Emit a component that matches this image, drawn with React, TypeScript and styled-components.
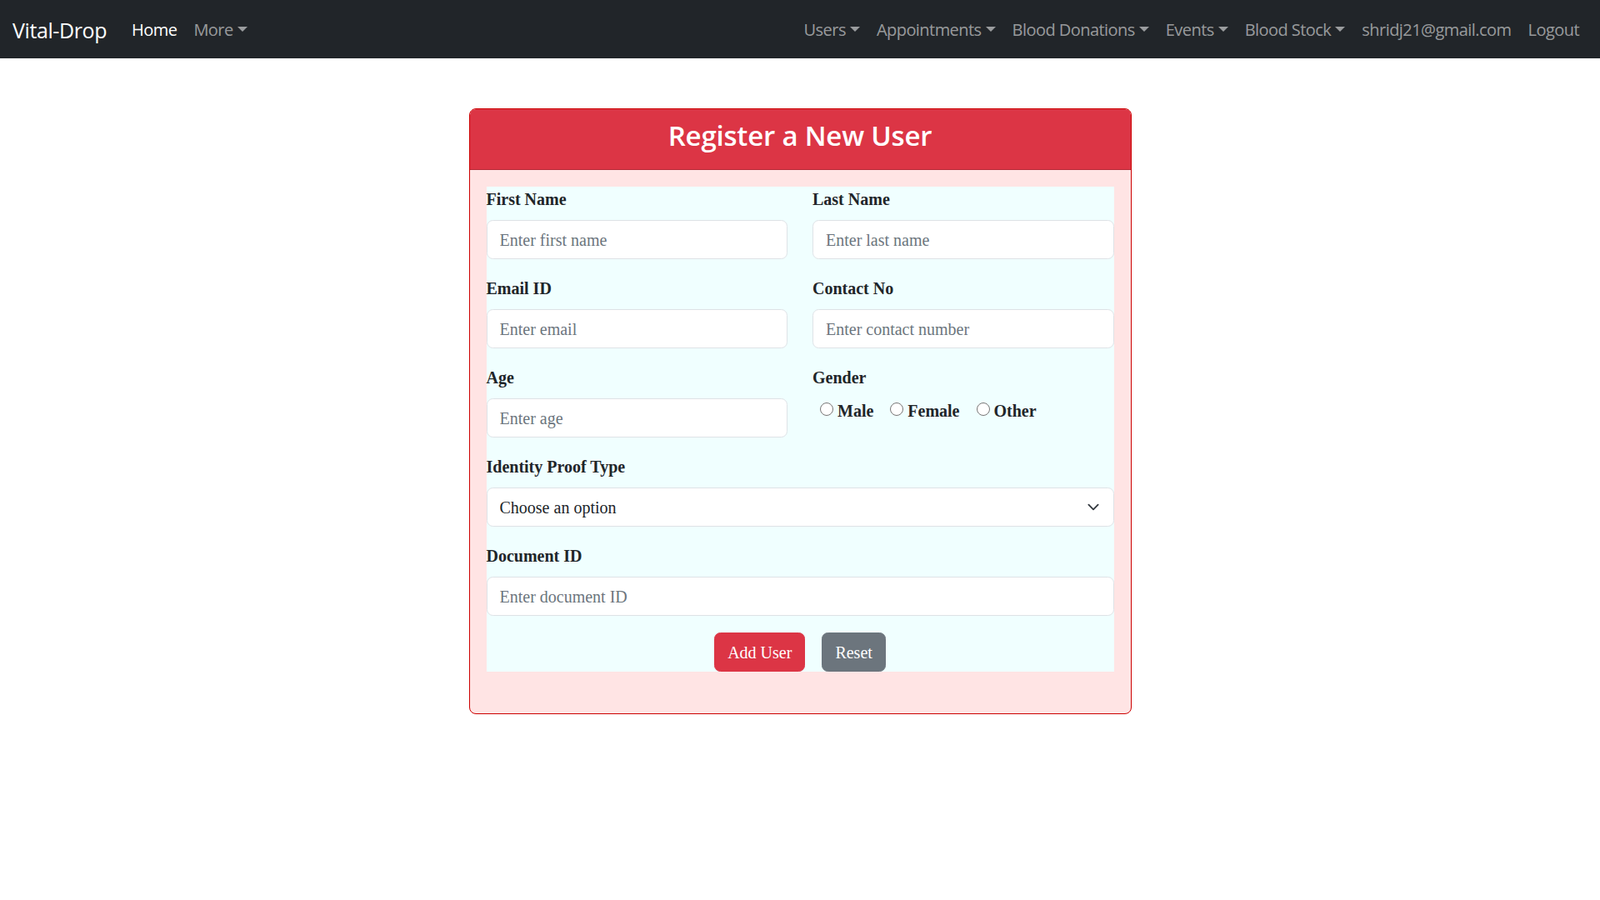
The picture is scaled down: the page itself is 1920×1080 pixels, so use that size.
import React from "react";
import styled, { createGlobalStyle } from "styled-components";

const GlobalStyle = createGlobalStyle`
  body {
    margin: 0;
    background: #fff;
    color: #212529;
    font-family: "Liberation Serif", "Times New Roman", serif;
  }
`;

const NavBar = styled.nav`
  height: 70px;
  box-sizing: border-box;
  padding: 2px 15px 0;
  background: #212529;
  display: flex;
  align-items: center;
  justify-content: space-between;
  font-family: "Open Sans", "Noto Sans", sans-serif;
`;

const NavGroup = styled.div`
  display: flex;
  align-items: center;
`;

const Brand = styled.a`
  font-size: 25px;
  line-height: 38px;
  letter-spacing: -0.4px;
  color: #fff;
  margin-right: 20px;
  text-decoration: none;
`;

const NavLink = styled.a<{ $active?: boolean; $dropdown?: boolean }>`
  font-size: 20px;
  line-height: 30px;
  letter-spacing: -0.55px;
  padding: 0 10px;
  color: ${(p) => (p.$active ? "#fff" : "rgba(255, 255, 255, 0.55)")};
  text-decoration: none;
  white-space: nowrap;

  ${(p) =>
    p.$dropdown &&
    `
    &::after {
      content: "";
      display: inline-block;
      margin-left: 5px;
      vertical-align: 5px;
      border-top: 6px solid;
      border-left: 6px solid transparent;
      border-right: 6px solid transparent;
    }
  `}
`;

const Main = styled.main`
  display: flex;
  justify-content: center;
  padding-top: 60px;
`;

const Card = styled.div`
  width: 795px;
  box-sizing: border-box;
  border: 1px solid #cc0000;
  border-radius: 8px;
  background: #ffe4e4;
  overflow: hidden;
`;

const CardHeader = styled.div`
  background: #dc3545;
  border-bottom: 1px solid rgba(0, 0, 0, 0.175);
  padding: 11px 20px 9px;
  text-align: center;
`;

const Title = styled.h3`
  margin: 0 0 10px;
  font-family: "Open Sans", "Noto Sans", sans-serif;
  font-size: 33px;
  font-weight: 600;
  line-height: 42px;
  letter-spacing: -0.2px;
  color: #fff;
`;

const CardBody = styled.div`
  padding: 20px 20px 50px;
`;

const Form = styled.form`
  background: #f0ffff;
  display: grid;
  grid-template-columns: 1fr 1fr;
  column-gap: 30px;
`;

const Field = styled.div<{ $full?: boolean }>`
  margin-bottom: 20px;
  grid-column: ${(p) => (p.$full ? "1 / -1" : "auto")};
`;

const Label = styled.label`
  display: block;
  font-size: 20px;
  line-height: 30px;
  font-weight: bold;
  margin-bottom: 10px;
`;

const Input = styled.input`
  display: block;
  width: 100%;
  box-sizing: border-box;
  padding: 7.5px 15px;
  font-family: inherit;
  font-size: 20px;
  line-height: 30px;
  color: #212529;
  background: #fff;
  border: 1px solid #dee2e6;
  border-radius: 7.5px;

  &::placeholder {
    color: #6c757d;
  }
`;

const SelectWrap = styled.div`
  position: relative;
`;

const Select = styled.select`
  display: block;
  width: 100%;
  box-sizing: border-box;
  appearance: none;
  padding: 7.5px 45px 7.5px 15px;
  font-family: inherit;
  font-size: 20px;
  line-height: 30px;
  color: #212529;
  background: #fff;
  border: 1px solid #dee2e6;
  border-radius: 7.5px;
`;

const Chevron = styled.svg`
  position: absolute;
  right: 15px;
  top: 50%;
  width: 20px;
  height: 15px;
  margin-top: -7.5px;
  pointer-events: none;
`;

const RadioGroup = styled.div`
  display: flex;
  align-items: center;
  gap: 20px;
  padding-left: 9px;
  height: 30px;
`;

const RadioOption = styled.label`
  display: inline-flex;
  align-items: center;
  gap: 5px;
  font-size: 20px;
  line-height: 30px;
  font-weight: bold;
`;

const Radio = styled.input`
  width: 16px;
  height: 16px;
  margin: -4px 0 0;
`;

const Actions = styled.div`
  grid-column: 1 / -1;
  display: flex;
  justify-content: center;
  gap: 20px;
`;

const Button = styled.button<{ $variant: "danger" | "secondary" }>`
  padding: 7.5px 15px;
  font-family: inherit;
  font-size: 20px;
  line-height: 30px;
  color: #fff;
  background: ${(p) => (p.$variant === "danger" ? "#dc3545" : "#6c757d")};
  border: 1px solid ${(p) => (p.$variant === "danger" ? "#dc3545" : "#6c757d")};
  border-radius: 7.5px;
  cursor: pointer;
`;

const App = () => {
  const rightLinks = ["Users", "Appointments", "Blood Donations", "Events", "Blood Stock"];

  return (
    <>
      <GlobalStyle />
      <NavBar>
        <NavGroup>
          <Brand href="#">Vital-Drop</Brand>
          <NavLink $active href="#">
            Home
          </NavLink>
          <NavLink $dropdown href="#">
            More
          </NavLink>
        </NavGroup>
        <NavGroup>
          {rightLinks.map((link) => (
            <NavLink key={link} $dropdown href="#">
              {link}
            </NavLink>
          ))}
          <NavLink href="#">shridj21@gmail.com</NavLink>
          <NavLink href="#">Logout</NavLink>
        </NavGroup>
      </NavBar>

      <Main>
        <Card>
          <CardHeader>
            <Title>Register a New User</Title>
          </CardHeader>
          <CardBody>
            <Form onSubmit={(e) => e.preventDefault()}>
              <Field>
                <Label>First Name</Label>
                <Input placeholder="Enter first name" />
              </Field>
              <Field>
                <Label>Last Name</Label>
                <Input placeholder="Enter last name" />
              </Field>
              <Field>
                <Label>Email ID</Label>
                <Input placeholder="Enter email" />
              </Field>
              <Field>
                <Label>Contact No</Label>
                <Input placeholder="Enter contact number" />
              </Field>
              <Field>
                <Label>Age</Label>
                <Input placeholder="Enter age" />
              </Field>
              <Field>
                <Label>Gender</Label>
                <RadioGroup>
                  {["Male", "Female", "Other"].map((g) => (
                    <RadioOption key={g}>
                      <Radio type="radio" name="gender" value={g} />
                      {g}
                    </RadioOption>
                  ))}
                </RadioGroup>
              </Field>
              <Field $full>
                <Label>Identity Proof Type</Label>
                <SelectWrap>
                  <Select defaultValue="">
                    <option value="">Choose an option</option>
                    <option value="aadhar">Aadhar Card</option>
                    <option value="pan">PAN Card</option>
                    <option value="passport">Passport</option>
                  </Select>
                  <Chevron viewBox="0 0 16 16">
                    <path
                      d="m2 5 6 6 6-6"
                      fill="none"
                      stroke="#343a40"
                      strokeWidth="2"
                      strokeLinecap="round"
                      strokeLinejoin="round"
                    />
                  </Chevron>
                </SelectWrap>
              </Field>
              <Field $full>
                <Label>Document ID</Label>
                <Input placeholder="Enter document ID" />
              </Field>
              <Actions>
                <Button $variant="danger" type="submit">
                  Add User
                </Button>
                <Button $variant="secondary" type="reset">
                  Reset
                </Button>
              </Actions>
            </Form>
          </CardBody>
        </Card>
      </Main>
    </>
  );
};

export default App;
